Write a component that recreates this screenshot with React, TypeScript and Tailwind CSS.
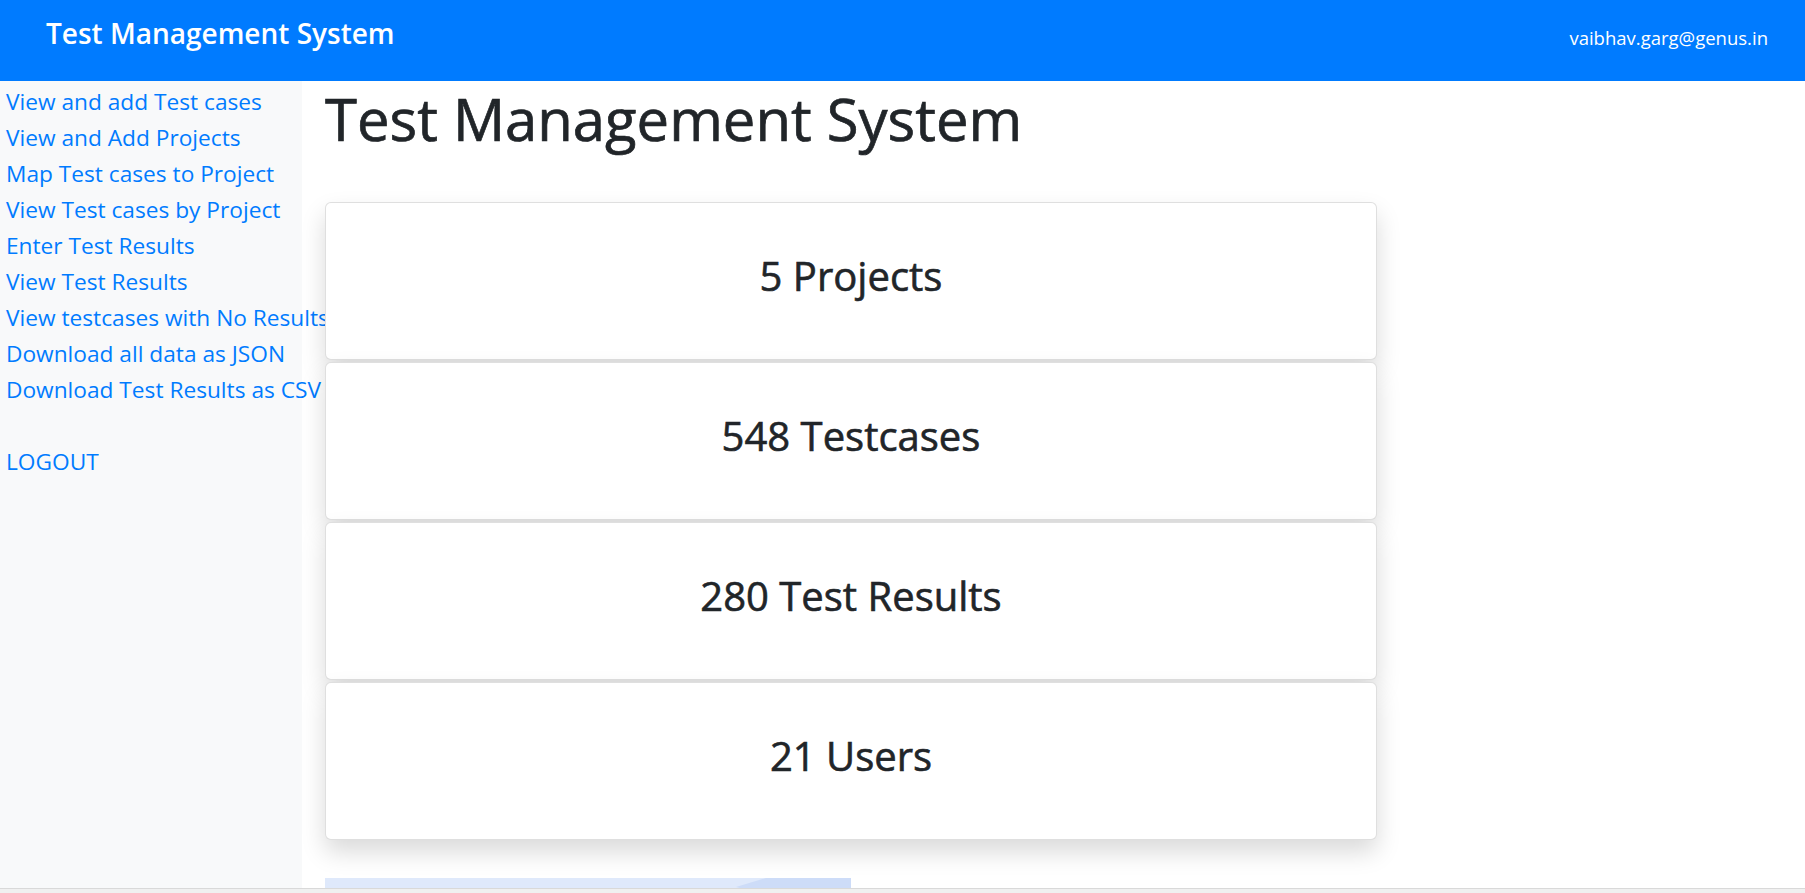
import React from 'react';

const links = [
  'View and add Test cases',
  'View and Add Projects',
  'Map Test cases to Project',
  'View Test cases by Project',
  'Enter Test Results',
  'View Test Results',
  'View testcases with No Results',
  'Download all data as JSON',
  'Download Test Results as CSV',
];

const stats = ['5 Projects', '548 Testcases', '280 Test Results', '21 Users'];

export default function App() {
  return (
    <div className="w-[1805px] h-[893px] flex flex-col bg-white overflow-hidden font-['Open_Sans',sans-serif] text-[#212529]">
      {/* Navbar */}
      <header className="h-[81px] shrink-0 bg-[#007bff] flex items-start justify-between px-[46px] pr-[37px]">
        <span className="pt-[11px] text-[28px] leading-[45px] font-semibold text-white">Test Management System</span>
        <span className="pt-[24px] text-[18.5px] leading-[27px] text-white">vaibhav.garg@genus.in</span>
      </header>

      <div className="h-[807px] flex overflow-hidden">
        {/* Sidebar */}
        <aside className="w-[302px] shrink-0 bg-[#f8f9fa] pt-[3px] pl-[6px] flex flex-col text-[22.7px] leading-[36px] text-[#007bff] whitespace-nowrap">
          {links.map((l) => (
            <a key={l} className="cursor-pointer">{l}</a>
          ))}
          <div className="h-[36px]" />
          <a className="cursor-pointer">LOGOUT</a>
        </aside>

        {/* Main */}
        <main className="flex-1 min-w-0 pl-[23px] flex flex-col">
          <h1 className="mt-[2px] text-[58px] leading-[72px] font-medium whitespace-nowrap [-webkit-text-stroke:0.7px_#212529]">
            Test Management System
          </h1>
          <div className="mt-[47px] w-[1052px] flex flex-col gap-[2px]">
            {stats.map((s) => (
              <div
                key={s}
                className="relative h-[158px] shrink-0 bg-white border border-black/[0.125] rounded-[6px] shadow-[0_12px_24px_rgba(0,0,0,0.15)] flex items-center justify-center pb-[10px]"
              >
                <h3 className="text-[40px] leading-[50px] font-medium [-webkit-text-stroke:0.6px_#212529]">{s}</h3>
              </div>
            ))}
          </div>
          <div className="relative mt-[38px] w-[526px] h-[40px] shrink-0 bg-[#dfe9fb] overflow-hidden">
            <div className="absolute right-0 top-0 w-[115px] h-full bg-[#cddcf8] [clip-path:polygon(30px_0,100%_0,100%_100%,0_9px)]" />
          </div>
        </main>
      </div>

      <div className="h-[5px] shrink-0 bg-[#f0f0f0] border-t border-[#d9d9d9]" />
    </div>
  );
}
